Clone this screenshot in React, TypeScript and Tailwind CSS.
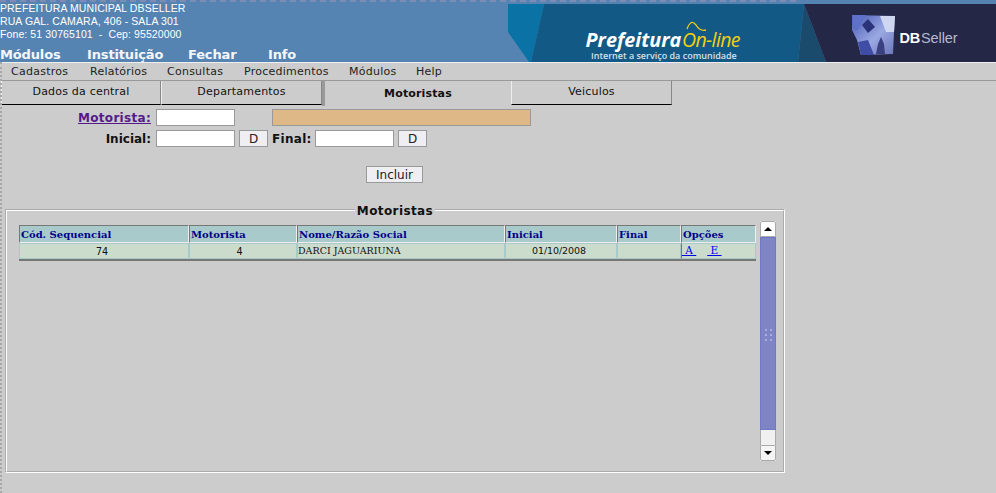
import React from "react";

const Banner = () => (
  <svg width="488" height="62" viewBox="508 0 488 62" className="block shrink-0">
    <defs>
      <linearGradient id="cube2" x1="0" y1="0" x2="1" y2="1">
        <stop offset="0" stopColor="#4758b4" />
        <stop offset="0.55" stopColor="#9aa8e2" />
        <stop offset="1" stopColor="#6a74b8" />
      </linearGradient>
      <filter id="soft" x="-10%" y="-10%" width="120%" height="120%">
        <feGaussianBlur stdDeviation="0.7" />
      </filter>
    </defs>
    <rect x="508" y="0" width="488" height="62" fill="#5584b3" />
    <polygon points="508,4 544,4 531,62 529,62 508,32" fill="#0a72a5" />
    <polygon points="544,4 804,4 798,62 531,62" fill="#125a85" />
    <polygon points="804,4 826,62 798,62" fill="#1a4a6c" />
    <polygon points="804,4 996,4 996,62 826,62" fill="#252747" />
    <g filter="url(#soft)">
      <polygon points="852,15 895,16 894,32 893,54 861,55 857,40 852,30" fill="url(#cube2)" />
      <polygon points="880,16 895,16 894,32 886,32" fill="#cfd6f0" />
      <polygon points="862,25 868,19 875,27 868,33" fill="#2c3278" />
      <polygon points="852,15 866,15 858,30 853,30" fill="#5f70c8" />
      <polygon points="876,54 878,44 881,37 884,44 885,54" fill="#3a3f80" />
      <polygon points="861,55 858,42 868,40 874,55" fill="#3f4ea6" />
    </g>
    <text x="585.5" y="47" fontFamily="'Open Sans', sans-serif" fontWeight="700" fontStyle="italic" fontSize="19.8" fill="#ffffff">Prefeitura</text>
    <text x="682" y="47" fontFamily="'Open Sans', sans-serif" fontStyle="italic" fontSize="19.5" letterSpacing="-0.6" fill="#f2cf10">On-line</text>
    <path d="M687 29 C690 21 693 21 696 25 C699 30 702 31 706 30" fill="none" stroke="#f2cf10" strokeWidth="1.3" />
    <text x="591" y="59" fontFamily="'Open Sans', sans-serif" fontSize="9" fontWeight="600" fill="#d4e0ea">Internet a serviço da comunidade</text>
    <text x="899.5" y="43" fontFamily="'Liberation Sans', sans-serif" fontWeight="700" fontSize="14.5" letterSpacing="-0.3" fill="#ffffff">DB</text>
    <text x="921" y="43" fontFamily="'Liberation Sans', sans-serif" fontSize="14.5" letterSpacing="-0.1" fill="#b4b9cc">Seller</text>
  </svg>
);

const Tab = ({ label, w, active }: { label: string; w: string; active?: boolean }) => (
  <div
    className={
      active
        ? `${w} h-[25px] flex items-center justify-center font-bold border-l-[3px] border-l-[#999] pt-[1px] tracking-[0.15px]`
        : `${w} h-[24px] flex items-center justify-center border-l border-l-[#eee] border-r border-r-[#888] border-b border-b-black pb-[1px] tracking-[0.2px]`
    }
  >
    {label}
  </div>
);

const Field = ({ w }: { w: string }) => (
  <div className={`${w} h-[17px] bg-white border border-[#999]`} />
);

const SmallBtn = ({ label, w }: { label: string; w: string }) => (
  <div className={`${w} h-[17px] flex items-center justify-center bg-[#eeeef3] border border-[#999] text-[12px] text-[#222]`}>
    {label}
  </div>
);

const Th = ({ w, label }: { w: string; label: string }) => (
  <div className={`${w} h-[18px] shrink-0 flex items-center pl-[1px] bg-[#a9caca] border border-t-[#777] border-l-[#777] border-r-[#eee] border-b-[#eee] font-bold text-[#00008b] text-[10px] [font-family:'DejaVu_Serif',serif]`}>
    {label}
  </div>
);

const Td = ({ w, children, cls }: { w: string; children?: React.ReactNode; cls?: string }) => (
  <div className={`${w} h-[16px] shrink-0 flex items-center bg-[#ccdccc] border border-[#a9caca] text-[9.5px] text-[#111] ${cls ?? ""}`}>
    {children}
  </div>
);

export default function App() {
  return (
    <div className="relative w-[996px] h-[493px] overflow-hidden bg-[#cccccc] text-[11px] text-[#111] [font-family:'DejaVu_Sans',sans-serif] flex flex-col">
      <div className="h-[62px] flex shrink-0 bg-[#5584b3]">
        <div className="w-[508px] pt-[2px] text-white text-[10.5px] tracking-[0.1px] leading-[13px] flex flex-col [font-family:'Liberation_Sans',sans-serif]">
          <div>PREFEITURA MUNICIPAL DBSELLER</div>
          <div>RUA GAL. CAMARA, 406 - SALA 301</div>
          <div className="whitespace-pre">Fone: 51 30765101  -  Cep: 95520000</div>
          <div className="mt-[6px] flex font-bold text-[13px] tracking-[-0.15px] leading-[16px] text-[#f4f6fa] [font-family:'DejaVu_Sans',sans-serif]">
            <span className="w-[87px]">Módulos</span>
            <span className="w-[101px]">Instituição</span>
            <span className="w-[80px]">Fechar</span>
            <span>Info</span>
          </div>
        </div>
        <Banner />
      </div>

      <div className="h-[19px] shrink-0 flex items-center pl-[11px] border-t border-t-[#eee] border-b border-b-[#999] text-[#222] tracking-[0.25px] pt-[1px]">
        <span className="w-[79px]">Cadastros</span>
        <span className="w-[77px]">Relatórios</span>
        <span className="w-[77px]">Consultas</span>
        <span className="w-[105px]">Procedimentos</span>
        <span className="w-[67px]">Módulos</span>
        <span>Help</span>
      </div>

      <div className="flex pl-[1px] h-[24px] shrink-0">
        <Tab label="Dados da central" w="w-[160px]" />
        <Tab label="Departamentos" w="w-[161px]" />
        <Tab label="Motoristas" w="w-[189px]" active />
        <Tab label="Veiculos" w="w-[161px]" />
      </div>

      <div className="shrink-0 h-[104px] pt-[4px] flex flex-col">
        <div className="flex items-center h-[17px]">
          <a className="w-[152px] text-right pr-[1px] text-[12px] tracking-[0.3px] font-bold underline text-[#551a8b]">Motorista:</a>
          <div className="ml-[4px]"><Field w="w-[79px]" /></div>
          <div className="ml-[37px] w-[259px] h-[17px] bg-[#deb887] border border-[#999]" />
        </div>
        <div className="flex items-center h-[17px] mt-[4px]">
          <span className="w-[151px] text-right text-[12px] font-bold">Inicial:</span>
          <div className="ml-[5px]"><Field w="w-[79px]" /></div>
          <div className="ml-[4px]"><SmallBtn label="D" w="w-[29px]" /></div>
          <span className="w-[43px] ml-[4px] text-[12px] tracking-[0.3px] font-bold">Final:</span>
          <Field w="w-[79px]" />
          <div className="ml-[4px]"><SmallBtn label="D" w="w-[29px]" /></div>
        </div>
        <div className="mt-[19px] ml-[366px]">
          <SmallBtn label="Incluir" w="w-[57px]" />
        </div>
      </div>

      <fieldset className="ml-[5px] w-[780px] h-[272px] -mt-[8px] shrink-0 border-2 border-white [border-style:groove]">
        <legend className="mx-auto px-[2px] pt-[4px] font-bold text-[12px] leading-[13px] tracking-[0.4px]">Motoristas</legend>
        <div className="flex items-start pl-[12px] pt-[5px]">
          <div className="w-[737px] mt-[2px]">
            <div className="flex">
              <Th w="w-[170px]" label="Cód. Sequencial" />
              <Th w="w-[108px]" label="Motorista" />
              <Th w="w-[208px]" label="Nome/Razão Social" />
              <Th w="w-[112px]" label="Inicial" />
              <Th w="w-[64px]" label="Final" />
              <Th w="w-[75px]" label="Opções" />
            </div>
            <div className="flex border-b-2 border-b-[#777] w-[737px]">
              <Td w="w-[170px]" cls="justify-center pr-[4px] [font-family:'DejaVu_Sans_Mono',monospace] text-[10px]">74</Td>
              <Td w="w-[108px]" cls="justify-center pr-[7px] [font-family:'DejaVu_Sans_Mono',monospace] text-[10px]">4</Td>
              <Td w="w-[208px]" cls="[font-family:'DejaVu_Serif',serif]">DARCI JAGUARIUNA</Td>
              <Td w="w-[112px]" cls="justify-center pr-[4px] tracking-[-0.1px]">01/10/2008</Td>
              <Td w="w-[64px]" />
              <Td w="w-[75px]" cls="gap-[11px] [font-family:'DejaVu_Serif',serif] text-[10.5px] border-l-[#777]">
                <a className="text-[#0000ee] underline whitespace-pre"> A </a>
                <a className="text-[#0000ee] underline whitespace-pre"> E </a>
              </Td>
            </div>
          </div>
          <div className="ml-[4px] -mt-[2px] w-[16px] h-[240px] flex flex-col shrink-0 bg-[#eeeeee]">
            <div className="h-[16px] rounded-t-[2px] border border-[#aaa] bg-white flex items-center justify-center shrink-0">
              <div className="w-0 h-0 border-x-[4px] border-x-transparent border-b-[4px] border-b-black" />
            </div>
            <div className="h-[193px] relative border border-[#7078c8] bg-[#7f85c4] flex items-center justify-center shrink-0">
              <div className="grid grid-cols-2 gap-[3px] absolute top-[91px]">
                {[0, 1, 2, 3, 4, 5].map((i) => (
                  <div key={i} className="w-[2px] h-[2px] bg-[#a9addf]" />
                ))}
              </div>
            </div>
            <div className="h-[15px] border-x border-[#aaa] bg-[#f0f0f0] shrink-0" />
            <div className="h-[16px] rounded-b-[2px] border border-[#aaa] bg-[#f4f4f4] flex items-center justify-center shrink-0">
              <div className="w-0 h-0 border-x-[4px] border-x-transparent border-t-[4px] border-t-black" />
            </div>
          </div>
        </div>
      </fieldset>

      <div className="absolute left-0 right-[200px] top-0 h-[2px] border-t-2 border-dashed border-t-[#7d8cb5]" />
      <div className="absolute left-0 top-[62px] bottom-0 w-[2px] border-l-2 border-dotted border-l-[#a8a8a8]" />
    </div>
  );
}
